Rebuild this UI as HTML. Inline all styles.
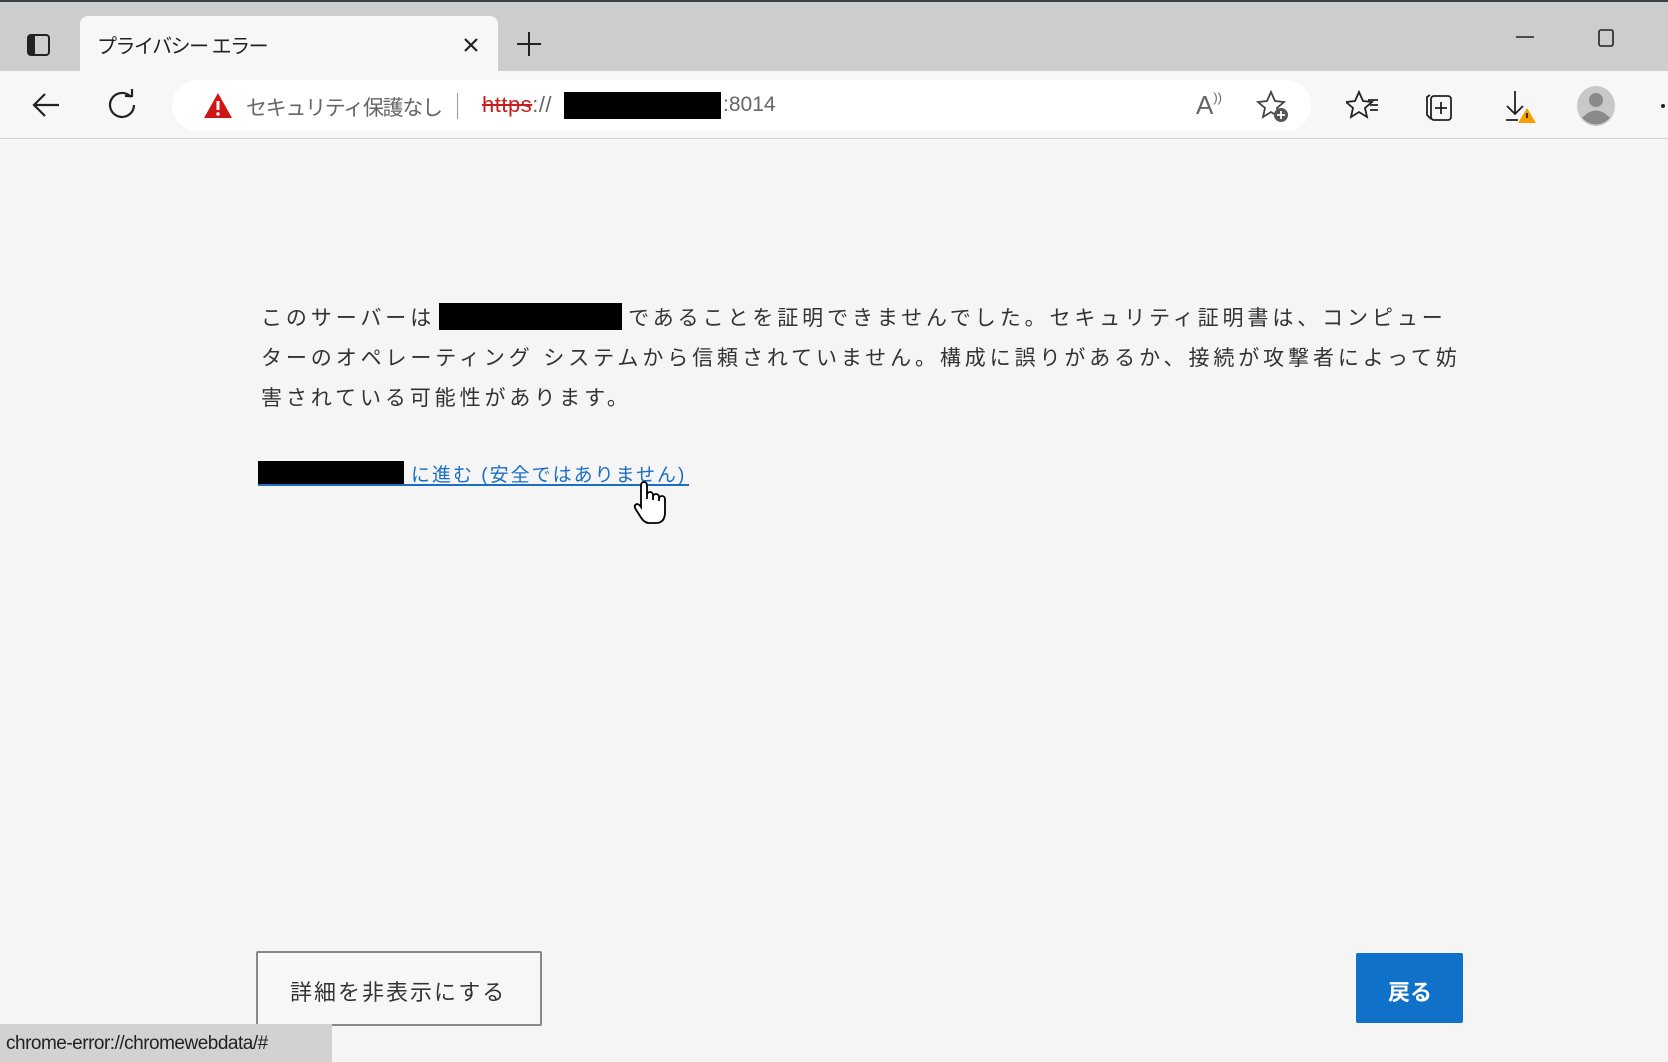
<!DOCTYPE html>
<html><head><meta charset="utf-8"><style>
*{margin:0;padding:0;box-sizing:border-box}
body{width:1668px;height:1062px;background:#f5f5f5;position:relative;overflow:hidden;font-family:"Liberation Sans","Noto Sans CJK JP",sans-serif;color:#333}
.abs{position:absolute}
#tabbar{left:0;top:0;width:1668px;height:71px;background:#cdcdcd;border-top:2px solid #3a3f48}
#tab{left:80px;top:16px;width:418px;height:56px;background:#f7f7f7;border-radius:8px 8px 0 0}
#toolbar{left:0;top:71px;width:1668px;height:68px;background:#f7f7f7;border-bottom:1px solid #d4d4d4}
#addr{left:172px;top:80px;width:1139px;height:51px;background:#fff;border-radius:26px}
.txt{white-space:nowrap}
.body{left:261px;font-size:21px;letter-spacing:3.9px;color:#333;white-space:nowrap}
</style></head><body>
<div id="tabbar" class="abs"></div>
<div id="tab" class="abs"></div>
<svg class="abs" style="left:26px;top:32px" width="26" height="26" viewBox="0 0 26 26"><rect x="2" y="3" width="21" height="20" rx="3" fill="none" stroke="#222" stroke-width="2"/><rect x="2" y="3" width="7" height="20" rx="2" fill="#222"/></svg>
<div class="abs txt" style="left:97px;top:30px;font-size:20px;color:#222;letter-spacing:-1.5px">プライバシー エラー</div>
<svg class="abs" style="left:462px;top:36px" width="18" height="18" viewBox="0 0 18 18"><path d="M3 3L15 15M15 3L3 15" stroke="#222" stroke-width="2.2"/></svg>
<svg class="abs" style="left:516px;top:31px" width="26" height="26" viewBox="0 0 26 26"><path d="M13 1V25M1 13H25" stroke="#222" stroke-width="2"/></svg>
<svg class="abs" style="left:1515px;top:30px" width="20" height="14"><path d="M1 7H19" stroke="#222" stroke-width="1.6"/></svg>
<svg class="abs" style="left:1596px;top:28px" width="20" height="20"><rect x="3" y="2" width="14" height="16" rx="2" fill="none" stroke="#222" stroke-width="1.6"/></svg>

<div id="toolbar" class="abs"></div>
<svg class="abs" style="left:30px;top:90px" width="32" height="30" viewBox="0 0 32 30"><path d="M29 15H4M15 4L4 15L15 26" fill="none" stroke="#222" stroke-width="2.2"/></svg>
<svg class="abs" style="left:106px;top:89px" width="32" height="32" viewBox="0 0 32 32"><path d="M25 8A12 12 0 1 0 28 16" fill="none" stroke="#222" stroke-width="2.2"/><path d="M19 7H26V0" fill="none" stroke="#222" stroke-width="2.2"/></svg>
<div id="addr" class="abs"></div>
<svg class="abs" style="left:203px;top:92px" width="30" height="27" viewBox="0 0 30 27"><path d="M15 1L29 26H1Z" fill="#d01515"/><path d="M15 9V18" stroke="#fff" stroke-width="3"/><circle cx="15" cy="22" r="1.7" fill="#fff"/></svg>
<div class="abs txt" style="left:246px;top:92px;font-size:21px;color:#666;letter-spacing:-1.3px">セキュリティ保護なし</div>
<div class="abs" style="left:457px;top:93px;width:1px;height:26px;background:#999"></div>
<div class="abs txt" style="left:482px;top:92px;font-size:22px;color:#c81e1e;letter-spacing:0.5px"><span style="text-decoration:line-through">https</span><span style="color:#666">://</span></div>
<div class="abs" style="left:564px;top:92px;width:157px;height:27px;background:#000"></div>
<div class="abs txt" style="left:723px;top:93px;font-size:21px;color:#666">:8014</div>
<div class="abs txt" style="left:1196px;top:90px;font-size:26px;color:#666;font-weight:300">A<span style="font-size:13px;vertical-align:top">))</span></div>
<svg class="abs" style="left:1256px;top:89px" width="34" height="34" viewBox="0 0 34 34"><path d="M15 3L19 12L28 13L21 19L23 28L15 23L7 28L9 19L2 13L11 12Z" fill="none" stroke="#444" stroke-width="1.8"/><circle cx="25" cy="26" r="7" fill="#555"/><path d="M25 22V30M21 26H29" stroke="#fff" stroke-width="1.8"/></svg>
<svg class="abs" style="left:1346px;top:89px" width="34" height="32" viewBox="0 0 34 32"><path d="M13 3L17 12L26 13L19 19L21 28L13 23L5 28L7 19L0 13L9 12Z" fill="none" stroke="#222" stroke-width="1.8"/><path d="M22 11H32M24 16H32M24 21H32" stroke="#222" stroke-width="1.8"/></svg>
<svg class="abs" style="left:1422px;top:89px" width="34" height="34" viewBox="0 0 34 34"><path d="M8 6L5 8V26L9 30" fill="none" stroke="#222" stroke-width="1.8"/><rect x="9" y="7" width="20" height="24" rx="3" fill="none" stroke="#222" stroke-width="1.8"/><path d="M19 13V25M13 19H25" stroke="#222" stroke-width="1.8"/></svg>
<svg class="abs" style="left:1504px;top:89px" width="34" height="36" viewBox="0 0 34 36"><path d="M11 2V25M3 17L11 25L19 17M2 31H14" fill="none" stroke="#222" stroke-width="1.8"/><path d="M23 19L32 34H14Z" fill="#f5a000"/><path d="M23 24V29" stroke="#222" stroke-width="1.8"/></svg>
<svg class="abs" style="left:1576px;top:85px" width="40" height="42" viewBox="0 0 40 42"><ellipse cx="20" cy="21" rx="19" ry="20" fill="#c8c8c8"/><circle cx="20" cy="15" r="7" fill="#8a8a8a"/><path d="M6 33Q20 18 34 33Q20 46 6 33Z" fill="#8a8a8a"/></svg>
<div class="abs" style="left:1661px;top:104px;width:4px;height:4px;background:#222;border-radius:2px"></div>

<div class="abs body" style="top:302px">このサーバーは<span style="display:inline-block;width:183px;height:27px;background:#000;vertical-align:-5px;margin:0 6px 0 4px"></span>であることを証明できませんでした。セキュリティ証明書は、コンピュー</div>
<div class="abs body" style="top:342px">ターのオペレーティング システムから信頼されていません。構成に誤りがあるか、接続が攻撃者によって妨</div>
<div class="abs body" style="top:382px">害されている可能性があります。</div>

<div class="abs" style="left:258px;top:461px;width:146px;height:23px;background:#000"></div>
<div class="abs txt" style="left:411px;top:460px;font-size:19px;color:#1a6fc4;letter-spacing:2px">に進む (安全ではありません)</div>
<div class="abs" style="left:258px;top:484px;width:431px;height:1.5px;background:#1a6fc4"></div>
<svg class="abs" style="left:632px;top:480px" width="36" height="46" viewBox="0 0 36 46"><path d="M9 22V5a3 3 0 0 1 6 0V19V15a3 3 0 0 1 6 0V20V17a3 3 0 0 1 6 0V21V19a3 3 0 0 1 6 0V32Q33 43 24 43H17Q12 43 8 36L3 28Q2 25 5 24Q7 24 9 27Z" fill="#fff" stroke="#000" stroke-width="1.8"/></svg>

<div class="abs" style="left:256px;top:951px;width:286px;height:75px;border:2px solid #888;background:#f7f7f7;border-radius:2px"></div>
<div class="abs txt" style="left:290px;top:975px;font-size:22px;color:#333;letter-spacing:2px">詳細を非表示にする</div>
<div class="abs" style="left:1356px;top:953px;width:107px;height:70px;background:#0f72c8;border-radius:2px"></div>
<div class="abs txt" style="left:1388px;top:975px;font-size:22px;color:#fff;font-weight:bold">戻る</div>

<div class="abs" style="left:0;top:1024px;width:332px;height:38px;background:#d2d2d2"></div>
<div class="abs txt" style="left:6px;top:1033px;font-size:19px;color:#222;letter-spacing:-0.5px">chrome-error://chromewebdata/#</div>
</body></html>
